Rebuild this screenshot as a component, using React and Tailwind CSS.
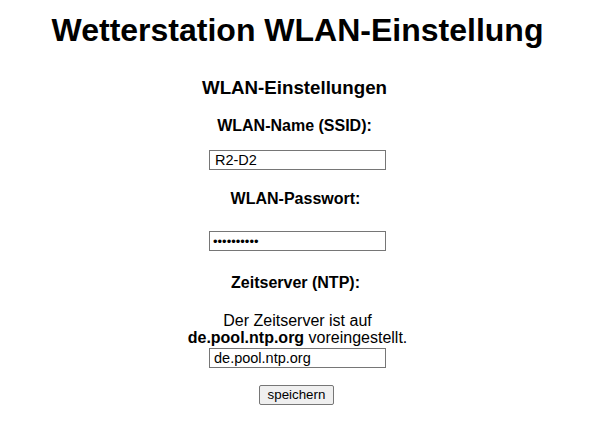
export default function App() {
  return (
    <div
      className="w-[595px] min-h-[423px] bg-white text-black flex flex-col items-center text-center"
      style={{ fontFamily: '"Liberation Sans", Arial, sans-serif' }}
    >
      <h1 className="mt-[12px] text-[32px] leading-[37px] font-bold">
        Wetterstation WLAN-Einstellung
      </h1>

      <h3 className="mt-[28px] text-[18.72px] leading-[22px] font-bold pr-[6px]">
        WLAN-Einstellungen
      </h3>

      <label className="mt-[18px] text-[16px] leading-[18px] font-bold pr-[6px]">
        WLAN-Name (SSID):
      </label>
      <input
        type="text"
        defaultValue="R2-D2"
        className="mt-[15px] w-[177px] h-[20px] border border-[#767676] px-[5px] text-[14.5px] leading-[18px] outline-none"
        style={{ fontFamily: '"Liberation Sans", Arial, sans-serif' }}
      />

      <label className="mt-[20px] text-[16px] leading-[18px] font-bold pr-[4px]">
        WLAN-Passwort:
      </label>
      <input
        type="password"
        defaultValue="1234567890"
        className="mt-[23px] w-[177px] h-[20px] border border-[#767676] px-[3px] text-[13px] leading-[18px] outline-none"
        style={{ fontFamily: '"Liberation Sans", Arial, sans-serif' }}
      />

      <label className="mt-[23px] text-[16px] leading-[18px] font-bold pr-[4px]">
        Zeitserver (NTP):
      </label>

      <p className="mt-[20px] text-[16px] leading-[17px]">
        Der Zeitserver ist auf
        <br />
        <b>de.pool.ntp.org</b> voreingestellt.
      </p>
      <input
        type="text"
        defaultValue="de.pool.ntp.org"
        className="mt-[2px] w-[177px] h-[20px] border border-[#767676] px-[4px] text-[14.5px] leading-[18px] outline-none"
        style={{ fontFamily: '"Liberation Sans", Arial, sans-serif' }}
      />

      <button
        type="button"
        className="mt-[17px] mr-[2px] h-[20px] px-[8px] bg-[#efefef] border border-[#767676] rounded-[2px] text-[13.33px] leading-[16px] text-black"
        style={{ fontFamily: '"Liberation Sans", Arial, sans-serif' }}
      >
        speichern
      </button>
    </div>
  );
}
